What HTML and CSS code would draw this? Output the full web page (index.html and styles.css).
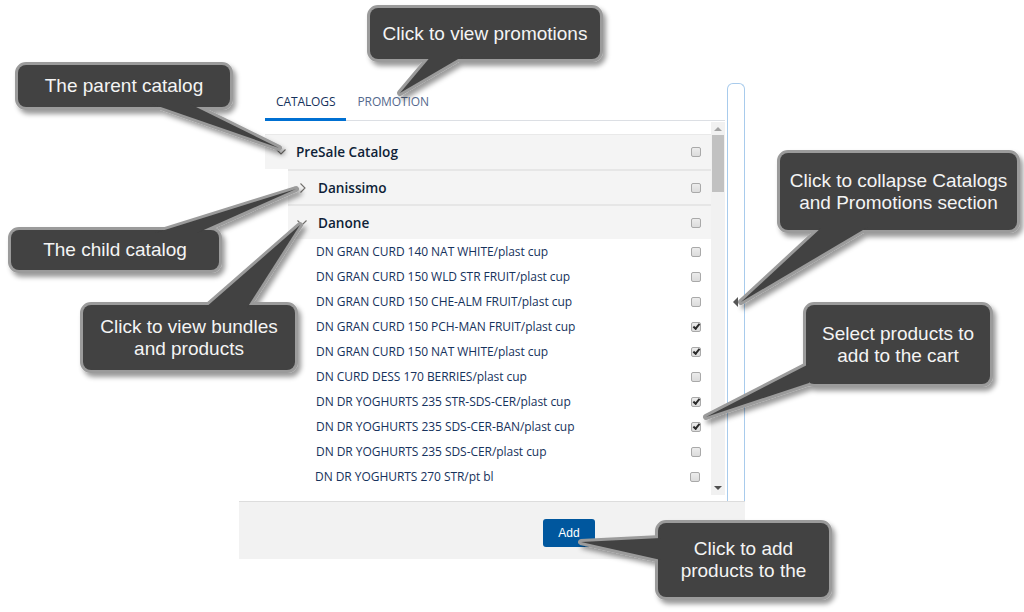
FILE: index.html
```html
<!DOCTYPE html>
<html lang="en">
<head>
<meta charset="utf-8">
<title>Catalogs</title>
<link rel="stylesheet" href="styles.css">
</head>
<body>
<div class="app">
  <div class="main">
    <section class="panel">
      <nav class="tabs">
        <div class="tab active">CATALOGS</div>
        <div class="tab">PROMOTION</div>
      </nav>
      <div class="list">
        <div class="list-content">
          <div class="cat cat-root">
            <span class="chev chev-root"><svg width="10" height="6" viewBox="0 0 10 6"><path d="M0.5 0.5 L5 5 L9.5 0.5" fill="none" stroke="#706e6b" stroke-width="1.1"/></svg></span>
            <span class="cat-name">PreSale Catalog</span>
            <span class="cb"></span>
          </div>
          <div class="cat cat-child">
            <span class="chev chev-right"><svg width="6" height="10" viewBox="0 0 6 10"><path d="M0.5 0.5 L5 5 L0.5 9.5" fill="none" stroke="#706e6b" stroke-width="1.1"/></svg></span>
            <span class="cat-name">Danissimo</span>
            <span class="cb"></span>
          </div>
          <div class="cat cat-child">
            <span class="chev chev-down"><svg width="10" height="6" viewBox="0 0 10 6"><path d="M0.5 0.5 L5 5 L9.5 0.5" fill="none" stroke="#706e6b" stroke-width="1.1"/></svg></span>
            <span class="cat-name">Danone</span>
            <span class="cb"></span>
          </div>
          <ul class="products">
            <li class="product"><span class="pname">DN GRAN CURD 140 NAT WHITE/plast cup</span><span class="cb"></span></li>
            <li class="product"><span class="pname">DN GRAN CURD 150 WLD STR FRUIT/plast cup</span><span class="cb"></span></li>
            <li class="product"><span class="pname">DN GRAN CURD 150 CHE-ALM FRUIT/plast cup</span><span class="cb"></span></li>
            <li class="product"><span class="pname">DN GRAN CURD 150 PCH-MAN FRUIT/plast cup</span><span class="cb checked"></span></li>
            <li class="product"><span class="pname">DN GRAN CURD 150 NAT WHITE/plast cup</span><span class="cb checked"></span></li>
            <li class="product"><span class="pname">DN CURD DESS 170 BERRIES/plast cup</span><span class="cb"></span></li>
            <li class="product"><span class="pname">DN DR YOGHURTS 235 STR-SDS-CER/plast cup</span><span class="cb checked"></span></li>
            <li class="product"><span class="pname">DN DR YOGHURTS 235 SDS-CER-BAN/plast cup</span><span class="cb checked"></span></li>
            <li class="product"><span class="pname">DN DR YOGHURTS 235 SDS-CER/plast cup</span><span class="cb"></span></li>
            <li class="product product-last"><span class="pname">DN DR YOGHURTS 270 STR/pt bl</span><span class="cb"></span></li>
          </ul>
        </div>
        <div class="scrollbar">
          <span class="sb-arrow sb-up"></span>
          <div class="sb-thumb"></div>
          <div class="sb-space"></div>
          <span class="sb-arrow sb-down"></span>
        </div>
      </div>
    </section>
    <aside class="collapse-bar"><span class="collapse-arrow"></span></aside>
  </div>
  <footer class="footer"><button class="btn-add">Add</button></footer>
</div>

<svg class="callouts" width="1024" height="612" viewBox="0 0 1024 612" aria-hidden="true">
  <defs>
    <filter id="shadow" x="-10%" y="-10%" width="130%" height="140%">
      <feDropShadow dx="3" dy="4" stdDeviation="2.5" flood-color="#000" flood-opacity="0.4"/>
    </filter>
    <g id="shapes">
      <rect x="370" y="8" width="230" height="51" rx="8"/>
      <polygon points="432,55 465,55 400,93"/>
      <rect x="18" y="65" width="212" height="42" rx="8"/>
      <polygon points="152,104 190,104 279,148"/>
      <rect x="11" y="230" width="208" height="40" rx="8"/>
      <polygon points="155,233 197,233 296,189"/>
      <rect x="83" y="305" width="212" height="65" rx="8"/>
      <polygon points="205,308 247,308 300,225"/>
      <rect x="780" y="153" width="237" height="77" rx="8"/>
      <polygon points="822,227 868,227 741,302"/>
      <rect x="806" y="305" width="184" height="79" rx="8"/>
      <polygon points="809,364 809,383 706,417"/>
      <rect x="658" y="523" width="171" height="74" rx="8"/>
      <polygon points="661,538 661,560 581,542"/>
    </g>
  </defs>
  <g filter="url(#shadow)">
    <use href="#shapes" fill="none" stroke="#9b9b9b" stroke-width="6" stroke-linejoin="round"/>
    <use href="#shapes" fill="#424242" stroke="none"/>
  </g>
</svg>
<div class="callout-label co-promo">Click to view promotions</div>
<div class="callout-label co-parent">The parent catalog</div>
<div class="callout-label co-child">The child catalog</div>
<div class="callout-label co-bundles">Click to view bundles<br>and products</div>
<div class="callout-label co-collapse">Click to collapse Catalogs<br>and Promotions section</div>
<div class="callout-label co-select">Select products to<br>add to the cart</div>
<div class="callout-label co-add">Click to add<br>products to the</div>
</body>
</html>
```
FILE: styles.css
```css
html, body {
  margin: 0;
  padding: 0;
  background: #ffffff;
}
body {
  width: 1024px;
  height: 612px;
  overflow: hidden;
  position: relative;
  font-family: "Open Sans", "Liberation Sans", sans-serif;
  color: #16325c;
}

.app {
  margin-left: 239px;
  padding-top: 83px;
  width: 506px;
}

.main {
  display: flex;
  gap: 2px;
  padding-left: 26px;
  height: 418px;
}

.panel {
  width: 460px;
  display: flex;
  flex-direction: column;
}

.tabs {
  display: flex;
  height: 37px;
  border-bottom: 1px solid #dcdfe4;
}
.tab {
  position: relative;
  display: flex;
  align-items: center;
  padding: 0 11px;
  font-size: 12px;
  color: #54698d;
  letter-spacing: -0.1px;
}
.tab.active {
  color: #16325c;
}
.tab.active::after {
  content: "";
  position: absolute;
  left: 0;
  right: 0;
  bottom: -1px;
  height: 3px;
  background: #0070d2;
}

.list {
  display: flex;
  height: 374px;
  overflow: hidden;
}
.list-content {
  width: 446px;
  padding-top: 13px;
  overflow: hidden;
}

.cat {
  display: flex;
  align-items: center;
  height: 33px;
  background: #f4f4f4;
  border-top: 2px solid #e6e6e6;
}
.cat-root {
  border-top: 1px solid #e9e9e9;
  height: 34px;
}
.cat-child {
  margin-left: 23px;
}
.chev {
  display: flex;
  align-items: center;
  box-sizing: border-box;
}
.chev-root {
  width: 31px;
  padding-left: 11px;
}
.chev-right {
  width: 30px;
  padding-left: 12px;
}
.chev-down {
  width: 30px;
  padding-left: 9px;
}
.cat-name {
  flex: 1;
  font-size: 13.6px;
  font-weight: 600;
  color: #0f1f38;
  padding-bottom: 1px;
}

.cb {
  position: relative;
  width: 8px;
  height: 8px;
  border: 1px solid #a9a9a9;
  border-radius: 2px;
  background: linear-gradient(#ececec, #dcdcdc);
  margin-right: 10px;
  flex: none;
}
.cb.checked::after {
  content: "";
  position: absolute;
  left: 1px;
  top: 1px;
  width: 5px;
  height: 2px;
  border-left: 2px solid #2b2b2b;
  border-bottom: 2px solid #2b2b2b;
  transform: rotate(-50deg);
}

.products {
  list-style: none;
  margin: 0;
  padding: 0;
}
.product {
  display: flex;
  align-items: center;
  height: 25px;
  padding-left: 51px;
}
.product-last {
  padding-left: 50px;
}
.product-last .cb {
  margin-right: 11px;
}
.pname {
  flex: 1;
  font-size: 12px;
  letter-spacing: -0.05px;
  color: #16325c;
  white-space: nowrap;
  padding-bottom: 1px;
}

.scrollbar {
  width: 14px;
  background: #f1f1f1;
  display: flex;
  flex-direction: column;
  align-items: center;
  margin-top: 1px;
}
.sb-arrow {
  width: 0;
  height: 0;
  border-left: 4px solid transparent;
  border-right: 4px solid transparent;
  margin: 5px 0 4px;
}
.sb-up {
  border-bottom: 4px solid #a3a3a3;
}
.sb-down {
  border-top: 4px solid #505050;
  margin: 4px 0 5px;
}
.sb-thumb {
  width: 12px;
  height: 57px;
  background: #c1c1c1;
}
.sb-space {
  flex: 1;
}

.collapse-bar {
  width: 18px;
  border: 1px solid #a8cbec;
  border-bottom: none;
  border-radius: 6px 6px 0 0;
  display: flex;
  flex-direction: column;
  padding-top: 213px;
  padding-left: 5px;
  box-sizing: border-box;
}
.collapse-arrow {
  width: 0;
  height: 0;
  border-top: 5px solid transparent;
  border-bottom: 5px solid transparent;
  border-right: 5px solid #555;
}

.footer {
  height: 58px;
  background: #f2f2f2;
  border-top: 1px solid #dddddd;
  padding: 17px 0 0 304px;
  box-sizing: border-box;
}
.btn-add {
  width: 52px;
  height: 28px;
  border: none;
  border-radius: 3px;
  background: #00579e;
  color: #ffffff;
  font-family: "Liberation Sans", Arial, sans-serif;
  font-size: 12px;
  padding: 0;
}

.callouts {
  position: absolute;
  left: 0;
  top: 0;
  pointer-events: none;
}
.callout-label {
  position: absolute;
  display: flex;
  align-items: center;
  justify-content: center;
  text-align: center;
  color: #f4f4f4;
  font-family: "Liberation Sans", Arial, sans-serif;
  font-size: 19px;
  line-height: 22px;
}
.co-promo { left: 367px; top: 5px; width: 236px; height: 57px; }
.co-parent { left: 15px; top: 62px; width: 218px; height: 48px; }
.co-child { left: 8px; top: 227px; width: 214px; height: 46px; }
.co-bundles { left: 80px; top: 302px; width: 218px; height: 71px; }
.co-collapse { left: 777px; top: 150px; width: 243px; height: 83px; }
.co-select { left: 803px; top: 302px; width: 190px; height: 85px; }
.co-add { left: 655px; top: 520px; width: 177px; height: 80px; }
```
